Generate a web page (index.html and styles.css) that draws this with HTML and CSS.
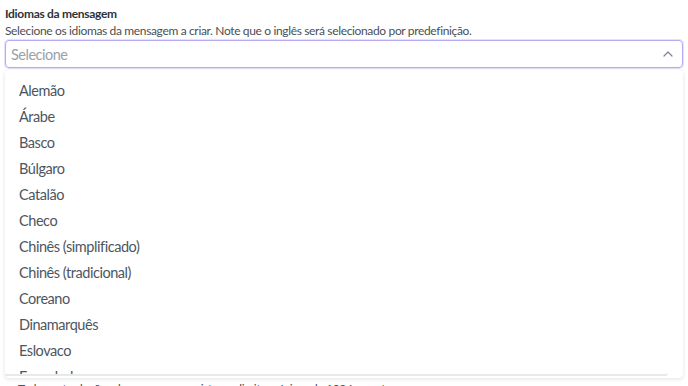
FILE: index.html
```html
<!DOCTYPE html>
<html lang="pt">
<head>
    <meta charset="UTF-8">
    <meta name="viewport" content="width=device-width, initial-scale=1.0">
    <title>Idiomas da mensagem</title>
    <link rel="stylesheet" href="styles.css">
</head>
<body>
<div class="container">
    <div class="field">
        <label class="field-label">Idiomas da mensagem</label>
        <p class="field-help">Selecione os idiomas da mensagem a criar. Note que o inglês será selecionado por predefinição.</p>

        <div class="select-wrap">
            <div class="select open">
                <span class="select-placeholder">Selecione</span>
                <svg class="select-chevron" width="10" height="6" viewBox="0 0 10 6">
                    <path d="M1 5 L5 1 L9 5" fill="none" stroke="#7b8794" stroke-width="1.2" stroke-linecap="round" stroke-linejoin="round"/>
                </svg>
            </div>

            <div class="dropdown">
                <ul class="dropdown-list">
                    <li>Alemão</li>
                    <li>Árabe</li>
                    <li>Basco</li>
                    <li>Búlgaro</li>
                    <li>Catalão</li>
                    <li>Checo</li>
                    <li>Chinês (simplificado)</li>
                    <li>Chinês (tradicional)</li>
                    <li>Coreano</li>
                    <li>Dinamarquês</li>
                    <li>Eslovaco</li>
                    <li>Espanhol</li>
                    <li>Finlandês</li>
                    <li>Francês</li>
                </ul>
            </div>
        </div>
    </div>

    <div class="field behind">
        <p class="field-help note">Todas as traduções da mensagem registem o limite máximo de 1024 caracteres.</p>
    </div>
</div>
</body>
</html>
```

FILE: styles.css
```css
* {
    box-sizing: border-box;
}

body {
    font-family: 'Lato', 'Open Sans', sans-serif;
    background-color: #fff;
    margin: 0;
    padding: 0;
    color: #333;
}

.container {
    padding: 6px 5px 0 5px;
}

.field-label {
    display: block;
    font-size: 12px;
    font-weight: 700;
    letter-spacing: -0.3px;
    color: #2f3338;
    line-height: 16px;
}

.field-help {
    margin: 0;
    font-size: 12px;
    letter-spacing: -0.35px;
    color: #4a4f55;
    line-height: 18px;
}

.select-wrap {
    position: relative;
}

.select {
    display: flex;
    align-items: center;
    justify-content: space-between;
    height: 28px;
    padding: 0 9px 0 5px;
    border: 1px solid #b6aaf2;
    border-radius: 4px;
    box-shadow: 0 0 0 1px rgba(182, 170, 242, 0.35);
}

.select-placeholder {
    font-size: 14.5px;
    letter-spacing: -0.5px;
    color: #9aa1a8;
}

.dropdown {
    position: absolute;
    top: 30px;
    left: 0;
    right: 0;
    height: 308px;
    background: #fff;
    border-radius: 4px;
    box-shadow: 0 1px 4px rgba(0, 0, 0, 0.12);
    overflow: hidden;
    z-index: 10;
}

.dropdown-list {
    list-style: none;
    padding: 8px 0 0 0;
    height: 306px;
    overflow: hidden;
    border-bottom: 2px solid #e6ebea;
    border-bottom-right-radius: 3px;
    margin: 0 15px 0 0;
}

.dropdown-list li {
    padding: 0 14px;
    font-size: 14.5px;
    letter-spacing: -0.45px;
    line-height: 26px;
    color: #4c5661;
}

.behind {
    margin-top: 312px;
}

.note {
    padding-left: 13px;
}
```
